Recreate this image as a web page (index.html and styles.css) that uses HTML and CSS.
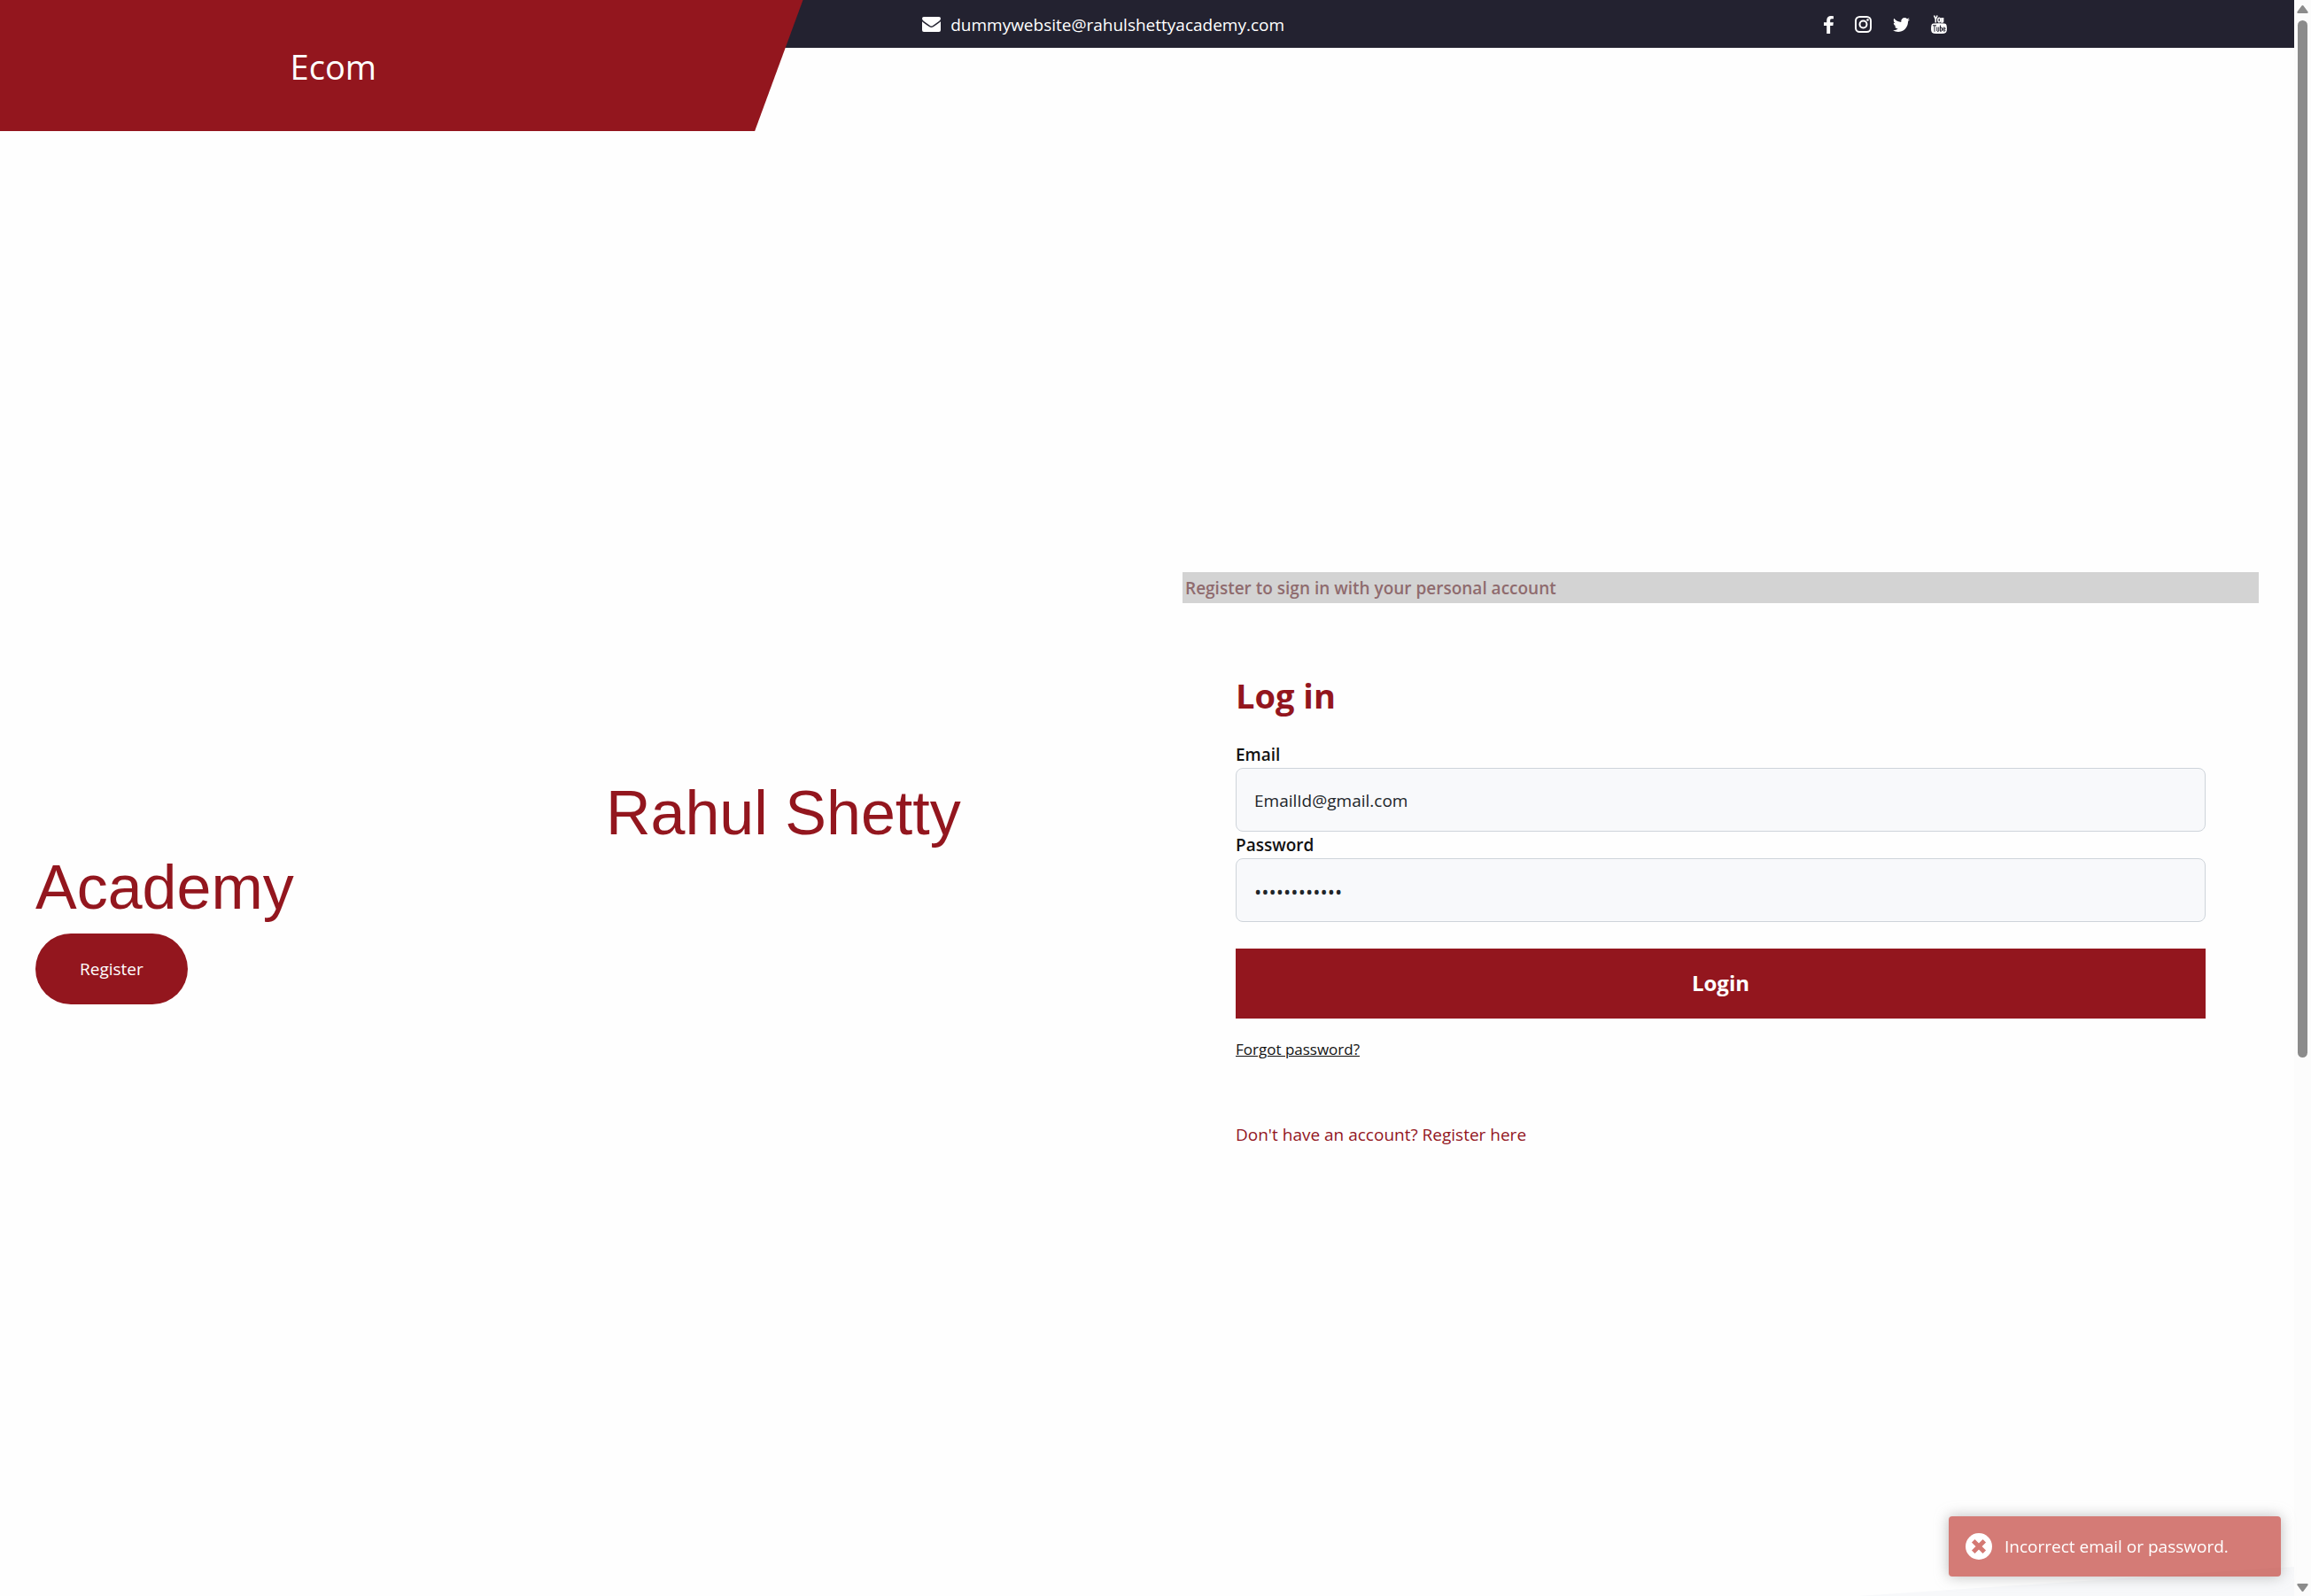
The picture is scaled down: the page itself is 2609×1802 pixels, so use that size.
FILE: index.html
```html
<!DOCTYPE html>
<html lang="en">
<head>
<meta charset="utf-8">
<title>Ecom - Log in</title>
<link rel="stylesheet" href="styles.css">
</head>
<body>
<div class="page">
  <header class="header">
    <div class="topbar">
      <a class="contact" href="#">
        <svg width="21" height="17" viewBox="0 0 21 17" aria-hidden="true"><path fill="currentColor" d="M0 5.2C.7 6 1.400 6.500 8.300 11.300Q10.500 12.800 12.700 11.300C19.600 6.500 20.300 6 21 5.200V15q0 2-2 2H2q-2 0-2-2zM2 0h17q2 0 2 2 0 1.700-2 3.100L12 9.900q-1.500 1-3 0L2 5.100Q0 3.700 0 2 0 0 2 0z"/></svg>
        <span>dummywebsite@rahulshettyacademy.com</span>
      </a>
      <nav class="social" aria-label="Social media">
        <a href="#" aria-label="Facebook"><svg width="11" height="20" viewBox="95 128 864 1664" preserveAspectRatio="none"><path fill="currentColor" d="M959 140v264H802q-86 0-116 36t-30 108v189h293l-39 296H656v759H350v-759H95V737h255V519q0-186 104-288.500T731 128q147 0 228 12z"/></svg></a>
        <a href="#" aria-label="Instagram"><svg width="19" height="19" viewBox="0 0 19 19"><rect x="1" y="1" width="17" height="17" rx="4.500" fill="none" stroke="currentColor" stroke-width="2"/><circle cx="9.500" cy="9.500" r="4" fill="none" stroke="currentColor" stroke-width="2"/><circle cx="14.500" cy="4.500" r="1.300" fill="currentColor"/></svg></a>
        <a href="#" aria-label="Twitter"><svg width="19" height="16" viewBox="44 256 1576 1280" preserveAspectRatio="none"><path fill="currentColor" d="M1620 408q-67 98-162 167 1 14 1 42 0 130-38 259.500T1305.500 1125 1121 1335.500t-258 146-323 54.500q-271 0-496-145 35 4 78 4 225 0 401-138-105-2-188-64.500T221 1033q33 5 61 5 43 0 85-11-112-23-185.500-111.500T108 710v-4q68 38 146 41-66-44-105-115t-39-154q0-88 44-163 121 149 294.500 238.500T820 653q-8-38-8-74 0-134 94.500-228.500T1135 256q140 0 236 102 109-21 205-78-37 115-142 178 93-10 186-50z"/></svg></a>
        <a href="#" aria-label="YouTube"><svg width="18" height="21" viewBox="0 0 18 21"><path fill="none" stroke="currentColor" stroke-width="1.600" d="M3.500 0.500 5.300 4.800V8.600M7.100.500 5.300 4.800M13.600 3v4q.3 1.200-1.600 1V3"/><ellipse cx="9.200" cy="5.500" rx="1.400" ry="2.400" fill="none" stroke="currentColor" stroke-width="1.400"/><path fill="currentColor" d="M3 9.600q6-.8 12 0 2.500.2 2.700 3 .5 3 0 5.500-.2 2.300-2.700 2.600-6 .6-12 0-2.500-.3-2.700-2.600-.5-2.500 0-5.500.2-2.800 2.700-3z"/><path fill="none" stroke="#232230" d="M2 11.800h4M4 11.800v7M6.800 13.500v4.500q.7 1 2 0v-4.500M10.500 11.500v7M10.500 14.200q2-.8 2 .8v2.200q0 1.400-2 .8M16 17q-.2 1.500-1.200 1.300-.9-.1-.9-1.200v-2q0-1.200 1-1.200 1.200 0 1.100 2.100h-2"/></svg></a>
      </nav>
    </div>
    <a class="brand" href="#">Ecom</a>
  </header>

  <main class="main">
    <section class="intro">
      <h1 class="intro-title">Rahul Shetty<br>Academy</h1>
      <button class="register" type="button">Register</button>
    </section>
    <section class="account">
      <p class="note">Register to sign in with your personal account</p>
      <form class="login">
        <h2 class="login-title">Log in</h2>
        <label class="label" for="email">Email</label>
        <input class="field" id="email" type="email" value="EmailId@gmail.com">
        <label class="label" for="password">Password</label>
        <input class="field field-secret" id="password" type="password" value="abcdefghijkl">
        <button class="submit" type="submit">Login</button>
        <a class="forgot" href="#">Forgot password?</a>
        <a class="signup" href="#">Don't have an account? Register here</a>
      </form>
    </section>
  </main>
  <div class="slope"></div>
</div>

<div class="scrollbar" aria-hidden="true">
  <svg width="13" height="9" viewBox="0 0 13 9"><path fill="#8b8b8b" d="M6.500 0q.6 0 1 .6l5 6.600q.6 1.800-1 1.800h-10q-1.600 0-1-1.800l5-6.600q.4-.6 1-.6z"/></svg>
  <div class="track"><div class="thumb"></div></div>
  <svg width="13" height="9" viewBox="0 0 13 9"><path fill="#8b8b8b" d="M6.500 9q.6 0 1-.6l5-6.600Q13.100 0 11.500 0h-10Q-.1 0 .5 1.800l5 6.600q.4.600 1 .6z"/></svg>
</div>

<div class="toast" role="alert">
  <svg width="30" height="30" viewBox="0 0 30 30" aria-hidden="true"><circle cx="15" cy="15" r="15" fill="#fff"/><path d="M10.500 10.500l9 9M19.500 10.500l-9 9" stroke="#d47973" stroke-width="5" stroke-linecap="square"/></svg>
  <span>Incorrect email or password.</span>
</div>
</body>
</html>
```
FILE: styles.css
```css
* {
  box-sizing: border-box;
}

body {
  display: flex;
  min-height: 100vh;
  margin: 0;
  background: #fefefe;
  color: #121212;
  font-family: "Open Sans", "Noto Sans", sans-serif;
  font-size: 19px;
  line-height: 30px;
}

a {
  color: inherit;
  text-decoration: none;
}

button,
input {
  font: inherit;
}

svg {
  display: block;
}

.page {
  display: flex;
  flex: 1;
  flex-direction: column;
  min-width: 0;
}

/* The slanted brand panel shares its first row with the dark bar. */
.header {
  display: grid;
  grid-template-columns: 35% 1fr;
  grid-template-rows: 54px 94px;
}

.topbar {
  display: flex;
  grid-area: 1 / 1 / 2 / 3;
  align-items: center;
  justify-content: space-between;
  padding: 1px 15.15% 0 40.2%;
  background: #232230;
  color: #fff;
}

.contact {
  display: flex;
  align-items: center;
  gap: 11px;
}

.social {
  display: flex;
  align-items: center;
  gap: 24px;
}

.brand {
  display: flex;
  grid-area: 1 / 1 / 3 / 2;
  align-items: center;
  justify-content: center;
  padding: 2px 154px 0 0;
  background: #93161e;
  clip-path: polygon(0 0, 100% 0, 94% 100%, 0 100%);
  color: #fff;
  font-size: 38px;
}

.main {
  display: grid;
  flex: 1;
  grid-template-columns: 1fr 1fr;
  align-items: center;
  padding-top: 92px;
}

.intro {
  padding: 0 40px;
}

.intro-title {
  margin: 0 0 10px;
  color: #93161e;
  font-family: "Liberation Sans", Arial, sans-serif;
  font-size: 70px;
  font-weight: 400;
  line-height: 84px;
  text-indent: 53%;
}

.register {
  height: 80px;
  padding: 0 50px;
  border: 0;
  border-radius: 40px;
  background: #93161e;
  color: #fff;
}

.account {
  padding: 0 40px;
}

.note {
  margin: 0;
  padding: 3px 3px 2px;
  background: #d3d3d3;
  color: #8f6b6e;
  font-weight: 600;
}

.login {
  display: flex;
  flex-direction: column;
  padding: 80px 60px 68px;
}

.login-title {
  margin: 0 0 28px;
  color: #93161e;
  font-size: 38px;
  font-weight: 700;
  line-height: 48px;
}

.label {
  font-weight: 600;
}

.field {
  height: 72px;
  padding: 2px 20px 0;
  border: 1px solid #ced4da;
  border-radius: 8px;
  background: #f8f9fb;
  color: #212529;
}

.field-secret {
  font-size: 22px;
}

.submit {
  height: 79px;
  margin: 30px 0 20px;
  border: 0;
  background: #93161e;
  color: #fff;
  font-size: 24px;
  font-weight: 700;
}

.forgot {
  align-self: flex-start;
  font-size: 17px;
  text-decoration: underline;
}

.signup {
  align-self: flex-start;
  margin-top: 66px;
  color: #93161e;
}

.slope {
  height: 33px;
  background: #f7f8fa;
  clip-path: polygon(100% 0, 100% 100%, 81% 100%);
}

.scrollbar {
  display: flex;
  flex-direction: column;
  align-items: center;
  gap: 8px;
  width: 19px;
  padding: 6px 0 5px;
  background: #fcfcfc;
}

.track {
  flex: 1;
}

.thumb {
  width: 11px;
  height: calc(200% / 3);
  border-radius: 6px;
  background: #8b8b8b;
}

.toast {
  position: fixed;
  right: 34px;
  bottom: 22px;
  display: flex;
  align-items: center;
  gap: 14px;
  width: 375px;
  height: 68px;
  padding: 0 19px;
  border-radius: 4px;
  background: rgba(189, 54, 47, 0.66);
  box-shadow: 0 0 15px rgba(153, 153, 153, 0.66);
  color: #fff;
}
```
